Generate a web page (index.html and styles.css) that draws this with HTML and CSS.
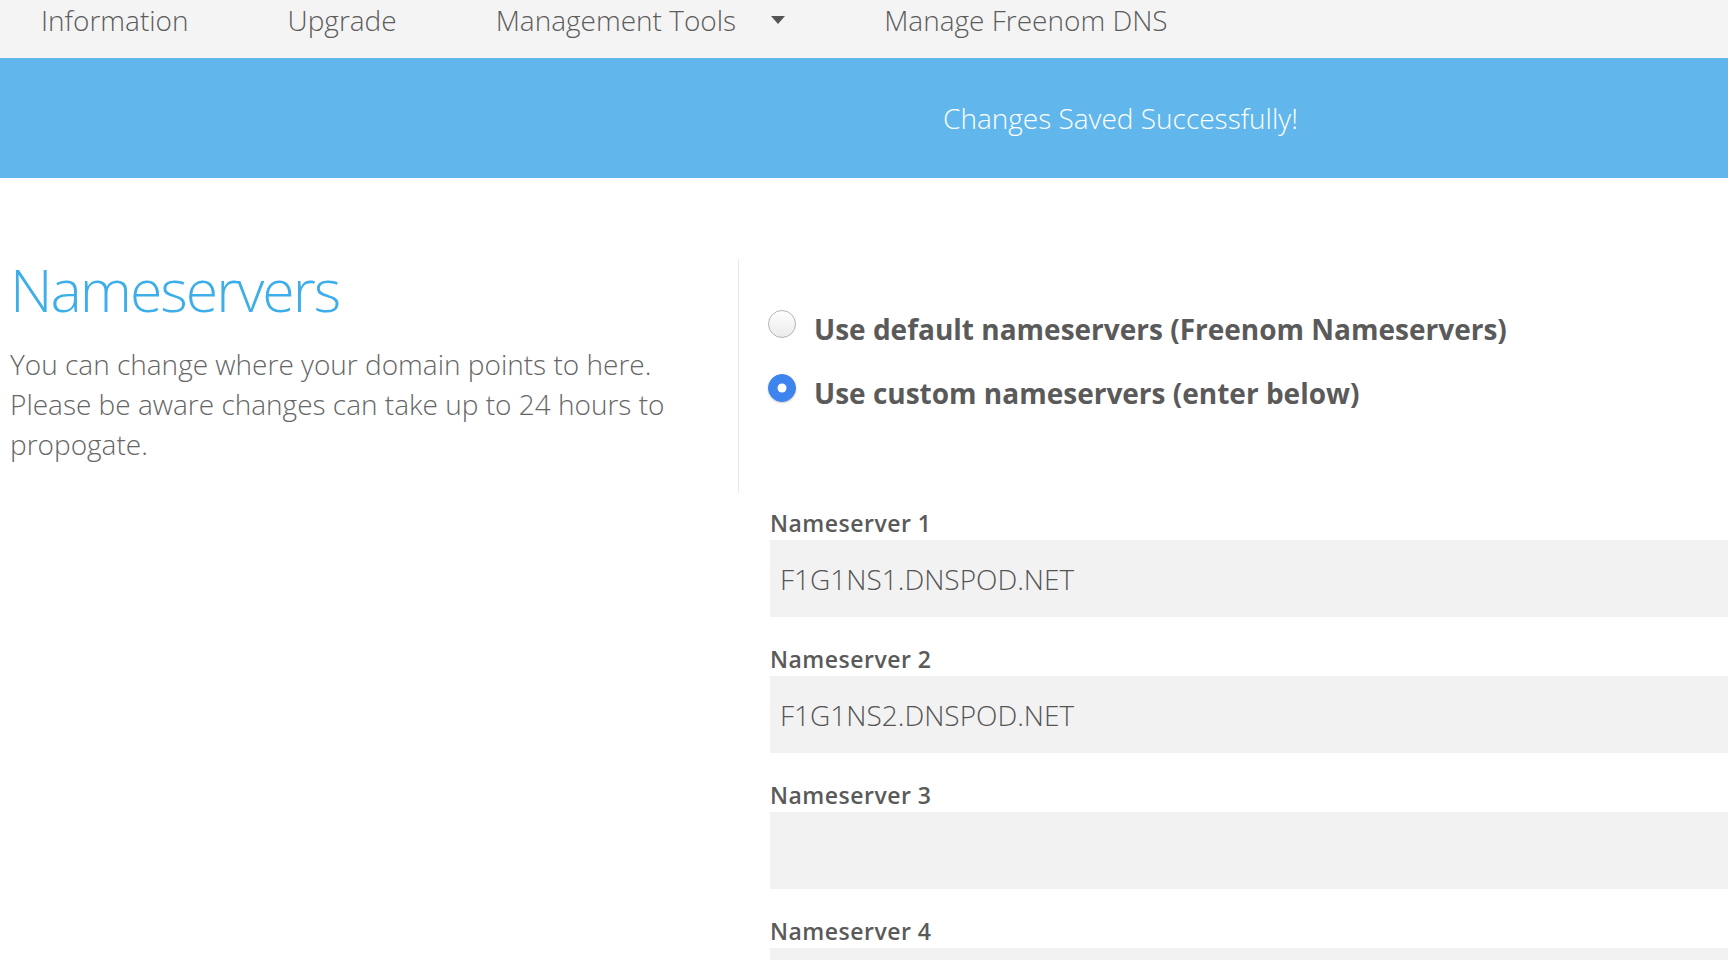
FILE: index.html
```html
<!DOCTYPE html>
<html lang="en">
<head>
<meta charset="utf-8">
<title>Nameservers</title>
<link rel="stylesheet" href="styles.css">
</head>
<body>
<nav class="topnav">
  <a class="nav-item">Information</a>
  <a class="nav-item">Upgrade</a>
  <a class="nav-item dropdown">Management Tools <span class="caret"></span></a>
  <a class="nav-item">Manage Freenom DNS</a>
</nav>
<div class="alert">Changes Saved Successfully!</div>
<main class="content">
  <section class="intro">
    <h1 class="title">Nameservers</h1>
    <p class="desc">You can change where your domain points to here. Please be aware changes can take up to 24 hours to propogate.</p>
  </section>
  <section class="form">
    <div class="radios">
      <label class="radio-row"><span class="radio"></span><span class="radio-text">Use default nameservers (Freenom Nameservers)</span></label>
      <label class="radio-row"><span class="radio checked"></span><span class="radio-text">Use custom nameservers (enter below)</span></label>
    </div>
    <div class="field">
      <div class="field-label">Nameserver 1</div>
      <div class="field-input">F1G1NS1.DNSPOD.NET</div>
    </div>
    <div class="field">
      <div class="field-label">Nameserver 2</div>
      <div class="field-input">F1G1NS2.DNSPOD.NET</div>
    </div>
    <div class="field">
      <div class="field-label">Nameserver 3</div>
      <div class="field-input"></div>
    </div>
    <div class="field">
      <div class="field-label">Nameserver 4</div>
      <div class="field-input"></div>
    </div>
  </section>
</main>
</body>
</html>
```

FILE: styles.css
```css
* { box-sizing: border-box; }
html, body { margin: 0; padding: 0; }
body {
  background: #ffffff;
  font-family: "Open Sans", "Liberation Sans", sans-serif;
  color: #666666;
  overflow: hidden;
  width: 1728px;
  height: 960px;
}
.topnav {
  height: 58px;
  background: #f4f4f4;
  display: flex;
  align-items: flex-start;
  padding-left: 41px;
  gap: 99px;
}
.nav-item {
  font-size: 28px;
  font-weight: 300;
  color: #5c5c5c;
  line-height: 40px;
  display: flex;
  align-items: center;
  white-space: nowrap;
}
.caret {
  display: inline-block;
  width: 0;
  height: 0;
  border-left: 7px solid transparent;
  border-right: 7px solid transparent;
  border-top: 8px solid #555555;
  margin-left: 35px;
}
.alert {
  height: 120px;
  background: #61b7ec;
  color: #ffffff;
  font-size: 28px;
  font-weight: 300;
  display: flex;
  align-items: center;
  padding-left: 943px;
}
.content {
  display: flex;
  align-items: flex-start;
  padding-top: 81px;
}
.intro {
  width: 739px;
  height: 234px;
  padding-left: 10px;
  border-right: 1px solid #e8e8e8;
}
.title {
  margin: 0;
  font-size: 59px;
  font-weight: 300;
  line-height: 60px;
  letter-spacing: -2px;
  color: #3daee9;
}
.desc {
  margin: 25px 0 0;
  font-size: 28px;
  font-weight: 300;
  line-height: 40px;
  color: #666666;
  width: 700px;
}
.form {
  flex: 1;
  padding-left: 31px;
  padding-top: 33px;
}
.radios {
  display: flex;
  flex-direction: column;
  margin-bottom: 88px;
}
.radio-row {
  display: flex;
  align-items: center;
  height: 64px;
  font-size: 28px;
  font-weight: 700;
  color: #5a5a5a;
}
.radio-text {
  padding-top: 10px;
}
.radio {
  width: 28px;
  height: 28px;
  border-radius: 50%;
  border: 1px solid #b4b4b4;
  background: linear-gradient(#ffffff, #ebebeb);
  margin-right: 18px;
  margin-left: -2px;
  flex: none;
  position: relative;
}
.radio.checked {
  border-color: #3d84ef;
  background: #3d84ef;
  box-shadow: 0 1px 2px rgba(0, 0, 0, 0.2);
}
.radio.checked::after {
  content: "";
  position: absolute;
  width: 9px;
  height: 9px;
  border-radius: 50%;
  background: #ffffff;
  left: 50%;
  top: 50%;
  transform: translate(-50%, -50%);
}
.field {
  margin-bottom: 27px;
}
.field-label {
  font-size: 23px;
  font-weight: 600;
  line-height: 30px;
  letter-spacing: 0.5px;
  color: #5a5a5a;
  margin-bottom: 2px;
}
.field-input {
  height: 77px;
  background: #f2f2f2;
  font-size: 28px;
  font-weight: 300;
  color: #555555;
  display: flex;
  align-items: center;
  padding-left: 10px;
  margin-right: -40px;
}
```
